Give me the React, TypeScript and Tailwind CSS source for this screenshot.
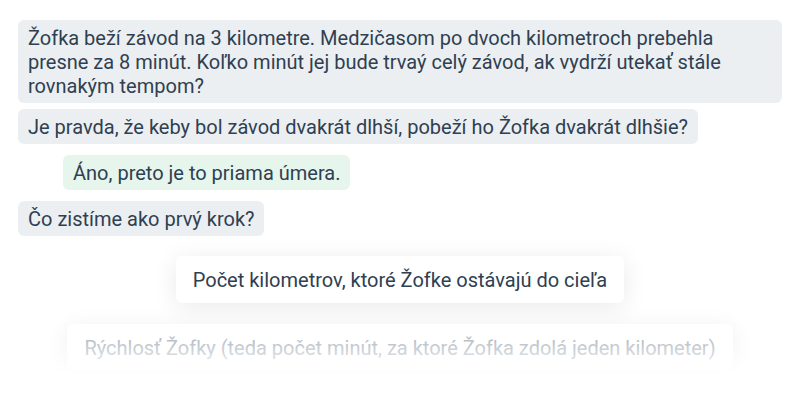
const MESSAGES = [
  {
    id: 1,
    from: "bot",
    text: "Žofka beží závod na 3 kilometre. Medzičasom po dvoch kilometroch prebehla presne za 8 minút. Koľko minút jej bude trvaý celý závod, ak vydrží utekať stále rovnakým tempom?",
  },
  {
    id: 2,
    from: "bot",
    text: "Je pravda, že keby bol závod dvakrát dlhší, pobeží ho Žofka dvakrát dlhšie?",
  },
  { id: 3, from: "user", text: "Áno, preto je to priama úmera." },
  { id: 4, from: "bot", text: "Čo zistíme ako prvý krok?" },
];

const OPTIONS = [
  "Počet kilometrov, ktoré Žofke ostávajú do cieľa",
  "Rýchlosť Žofky (teda počet minút, za ktoré Žofka zdolá jeden kilometer)",
];

export default function App() {
  return (
    <div className="relative w-[800px] h-[400px] overflow-hidden bg-white font-['Roboto',sans-serif] text-[20px] leading-6 text-[#2f4052]">
      <div className="flex flex-col items-start pt-5 px-[18px]">
        {MESSAGES.map((m, i) => {
          const prev = MESSAGES[i - 1];
          const gap = !prev ? "" : prev.from === m.from ? "mt-1.5" : "mt-[11px]";
          return m.from === "user" ? (
            <div
              key={m.id}
              className={`${gap} ml-[45px] rounded-md bg-[#e6f6ec] px-2.5 py-[5.5px]`}
            >
              {m.text}
            </div>
          ) : (
            <div
              key={m.id}
              className={`${gap} max-w-[770px] rounded-md bg-[#eceff1] px-2.5 py-[5.5px]`}
            >
              {m.text}
            </div>
          );
        })}
      </div>

      <div className="mt-5 flex flex-col items-center gap-[21px]">
        <div className="rounded-md bg-white px-[17px] py-[11.5px] shadow-[0_4px_24px_rgba(0,0,0,0.09)]">
          {OPTIONS[0]}
        </div>
        <div className="rounded-md bg-white px-[17px] py-[11.5px] text-[#b4bcc5] shadow-[0_4px_24px_rgba(0,0,0,0.07)]">
          {OPTIONS[1]}
        </div>
      </div>

      <div className="pointer-events-none absolute inset-x-0 bottom-0 h-[62px] bg-gradient-to-b from-transparent from-0% to-white to-60%" />
    </div>
  );
}
